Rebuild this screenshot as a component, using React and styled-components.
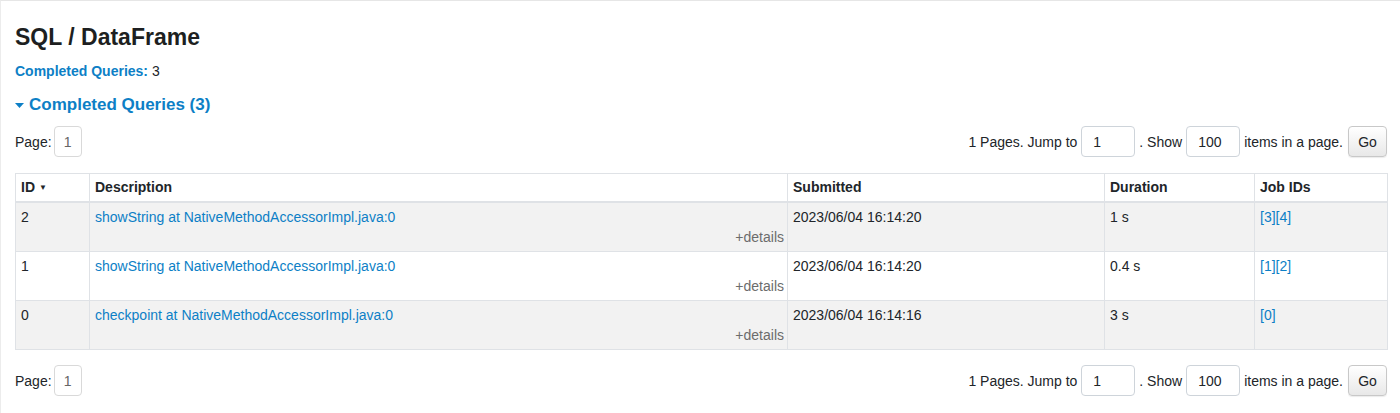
import React from 'react'
import styled, { createGlobalStyle } from 'styled-components'

const GlobalStyle = createGlobalStyle`
  body {
    margin: 0;
    background: #fff;
    font-family: "Liberation Sans", Arial, sans-serif;
    font-size: 14px;
    color: #212529;
  }
`

const Page = styled.div`
  border-top: 1px solid #e6e6e6;
  border-left: 1px solid #ececec;
  padding: 22px 13px 20px 14px;
  min-height: 390px;
  box-sizing: border-box;
`

const Title = styled.h3`
  margin: 0;
  font-size: 23px;
  line-height: 28px;
  font-weight: bold;
  color: #1d1f21;
`

const Summary = styled.div`
  margin-top: 10px;
  line-height: 20px;
  font-size: 14px;
`

const Strong = styled.strong`
  color: #0d7fc6;
`

const SectionHeader = styled.h4`
  margin: 12px 0 0;
  display: flex;
  align-items: center;
  font-size: 17px;
  line-height: 24px;
  font-weight: bold;
  color: #0d7fc6;
`

const Arrow = styled.svg`
  width: 9px;
  height: 5px;
  margin-right: 5px;
  margin-top: 1px;
`

const Pager = styled.div`
  display: flex;
  justify-content: space-between;
  align-items: center;
  margin-top: ${(p) => p.$top}px;
  height: 31px;
`

const Group = styled.div`
  display: flex;
  align-items: center;
  gap: ${(p) => p.$gap || 4}px;
`

const PageBox = styled.span`
  box-sizing: border-box;
  width: 28px;
  height: 31px;
  display: inline-flex;
  align-items: center;
  justify-content: center;
  border: 1px solid #d9d9d9;
  border-radius: 4px;
  color: #666;
  font-size: 14px;
`

const Field = styled.input`
  box-sizing: border-box;
  width: 54px;
  height: 31px;
  padding: 0 11px;
  border: 1px solid #ced4da;
  border-radius: 4px;
  font-family: "Liberation Sans", Arial, sans-serif;
  font-size: 14px;
  color: #212529;
  background: #fff;
  outline: none;
`

const GoButton = styled.button`
  box-sizing: border-box;
  width: 39px;
  height: 31px;
  margin-left: 1px;
  border: 1px solid #c8c8c8;
  border-radius: 4px;
  background: linear-gradient(#ffffff, #e8e8e8);
  box-shadow: 0 1px 1px rgba(0, 0, 0, 0.08);
  font-family: "Liberation Sans", Arial, sans-serif;
  font-size: 14px;
  color: #212529;
  padding: 0;
`

const Table = styled.table`
  margin-top: 16px;
  width: 100%;
  table-layout: fixed;
  border-collapse: collapse;
  border: 1px solid #dfe2e6;
`

const Th = styled.th`
  text-align: left;
  font-weight: bold;
  padding: 4px 5px;
  line-height: 19px;
  border: 1px solid #dfe2e6;
  border-bottom: 2px solid #dfe2e6;
  white-space: nowrap;
`

const SortMark = styled.span`
  font-size: 8px;
  margin-left: 4px;
  vertical-align: 2px;
`

const Row = styled.tr`
  background: ${(p) => (p.$striped ? '#f2f2f2' : '#fff')};
`

const Td = styled.td`
  vertical-align: top;
  padding: 4px 5px;
  line-height: 20px;
  border: 1px solid #dfe2e6;
`

const Link = styled.a`
  color: #0d7fc6;
  text-decoration: none;
  cursor: pointer;
`

const Details = styled.div`
  text-align: right;
  color: #6c6c6c;
  line-height: 20px;
  margin-right: -2px;
`

const queries = [
  { id: 2, desc: 'showString at NativeMethodAccessorImpl.java:0', submitted: '2023/06/04 16:14:20', duration: '1 s', jobs: [3, 4] },
  { id: 1, desc: 'showString at NativeMethodAccessorImpl.java:0', submitted: '2023/06/04 16:14:20', duration: '0.4 s', jobs: [1, 2] },
  { id: 0, desc: 'checkpoint at NativeMethodAccessorImpl.java:0', submitted: '2023/06/04 16:14:16', duration: '3 s', jobs: [0] },
]

const Pagination = ({ top }) => (
  <Pager $top={top}>
    <Group $gap={2}>
      <span>Page:</span>
      <PageBox>1</PageBox>
    </Group>
    <Group>
      <span>1 Pages. Jump to</span>
      <Field defaultValue="1" />
      <span>. Show</span>
      <Field defaultValue="100" />
      <span>items in a page.</span>
      <GoButton>Go</GoButton>
    </Group>
  </Pager>
)

const App = () => {
  return (
    <>
      <GlobalStyle />
      <Page>
        <Title>SQL / DataFrame</Title>
        <Summary>
          <Strong>Completed Queries:</Strong> 3
        </Summary>
        <SectionHeader>
          <Arrow viewBox="0 0 9 5">
            <polygon points="0,0 9,0 4.5,5" fill="#0d7fc6" />
          </Arrow>
          Completed Queries (3)
        </SectionHeader>
        <Pagination top={9} />
        <Table>
          <colgroup>
            <col style={{ width: 74 }} />
            <col style={{ width: 698 }} />
            <col style={{ width: 317 }} />
            <col style={{ width: 150 }} />
            <col style={{ width: 133 }} />
          </colgroup>
          <thead>
            <tr>
              <Th>ID<SortMark>▼</SortMark></Th>
              <Th>Description</Th>
              <Th>Submitted</Th>
              <Th>Duration</Th>
              <Th>Job IDs</Th>
            </tr>
          </thead>
          <tbody>
            {queries.map((q, i) => (
              <Row key={q.id} $striped={i % 2 === 0}>
                <Td>{q.id}</Td>
                <Td>
                  <Link>{q.desc}</Link>
                  <Details>+details</Details>
                </Td>
                <Td>{q.submitted}</Td>
                <Td>{q.duration}</Td>
                <Td>
                  {q.jobs.map((j) => (
                    <Link key={j}>[{j}]</Link>
                  ))}
                </Td>
              </Row>
            ))}
          </tbody>
        </Table>
        <Pagination top={15} />
      </Page>
    </>
  )
}

export default App
